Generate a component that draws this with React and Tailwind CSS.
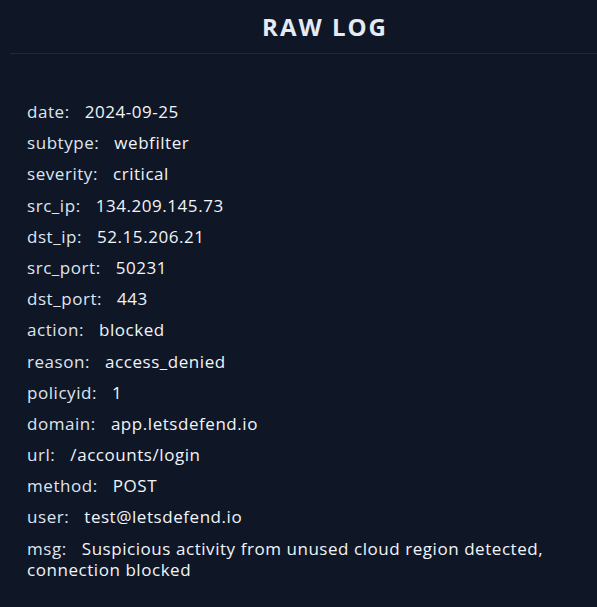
const rows = [
  ["date", "2024-09-25"],
  ["subtype", "webfilter"],
  ["severity", "critical"],
  ["src_ip", "134.209.145.73"],
  ["dst_ip", "52.15.206.21"],
  ["src_port", "50231"],
  ["dst_port", "443"],
  ["action", "blocked"],
  ["reason", "access_denied"],
  ["policyid", "1"],
  ["domain", "app.letsdefend.io"],
  ["url", "/accounts/login"],
  ["method", "POST"],
  ["user", "test@letsdefend.io"],
  ["msg", "Suspicious activity from unused cloud region detected, connection blocked"],
];

export default function App() {
  return (
    <div className="w-[597px] h-[607px] overflow-hidden bg-[#0f1727] text-[#e6ebf2]" style={{ fontFamily: '"Open Sans", "Noto Sans", sans-serif' }}>
      <div className="ml-[10px] w-[630px] border-b border-[#1c2744] h-[54px] flex items-center justify-center">
        <h1 className="text-[24px] font-bold tracking-[2px] text-[#e4ebf5]">RAW LOG</h1>
      </div>
      <div className="pl-[27px] pr-[30px] pt-[47px] flex flex-col gap-[10.2px] text-[17px] tracking-[0.55px] leading-[21px]">
        {rows.map(([k, v]) => (
          <div key={k}>
            <span className="text-[#dfe5ee]">{k}:</span>
            <span className="ml-[15px] text-[#f1f4f8]">{v}</span>
          </div>
        ))}
      </div>
    </div>
  );
}
